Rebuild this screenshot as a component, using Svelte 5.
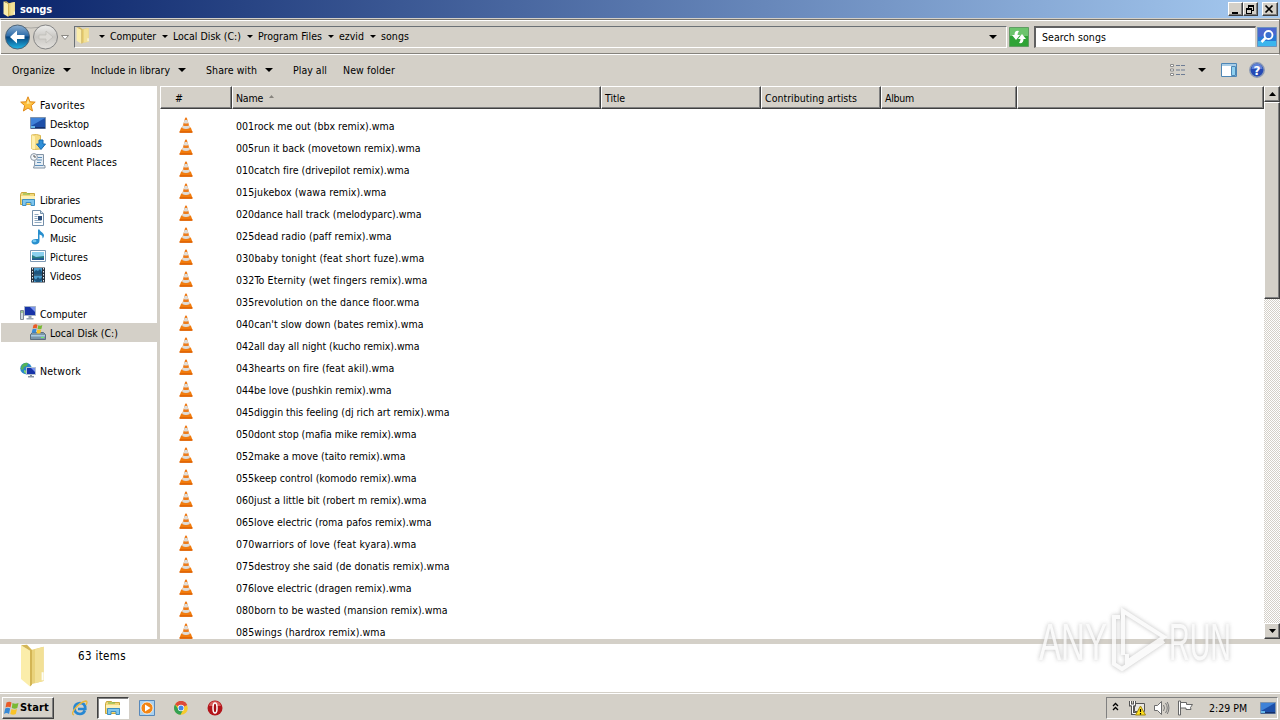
<script>
	// Text widths are the pixel widths of the classic UI font
	const songs = [
		['001rock me out (bbx remix).wma', 158.5],
		['005run it back (movetown remix).wma', 184.5],
		['010catch fire (drivepilot remix).wma', 173.5],
		['015jukebox (wawa remix).wma', 150.5],
		['020dance hall track (melodyparc).wma', 185.5],
		['025dead radio (paff remix).wma', 155.5],
		['030baby tonight (feat short fuze).wma', 188.5],
		['032To Eternity (wet fingers remix).wma', 191.5],
		['035revolution on the dance floor.wma', 183.5],
		["040can't slow down (bates remix).wma", 187.5],
		['042all day all night (kucho remix).wma', 183.5],
		['043hearts on fire (feat akil).wma', 158.5],
		['044be love (pushkin remix).wma', 155.5],
		['045diggin this feeling (dj rich art remix).wma', 213.5],
		['050dont stop (mafia mike remix).wma', 180.5],
		['052make a move (taito remix).wma', 169.5],
		['055keep control (komodo remix).wma', 180.5],
		['060just a little bit (robert m remix).wma', 190.5],
		['065love electric (roma pafos remix).wma', 195.5],
		['070warriors of love (feat kyara).wma', 180.5],
		['075destroy she said (de donatis remix).wma', 213.5],
		['076love electric (dragen remix).wma', 175.5],
		['080born to be wasted (mansion remix).wma', 211.5],
		['085wings (hardrox remix).wma', 149.5]
	];
	const crumbs = [
		['Computer', 46],
		['Local Disk (C:)', 68],
		['Program Files', 64],
		['ezvid', 25],
		['songs', 28]
	];
	const commands = [
		['Organize', 43, true],
		['Include in library', 79, true],
		['Share with', 51, true],
		['Play all', 34, false],
		['New folder', 52, false]
	];
	const columns = [
		['#', 72, 7],
		['Name', 369, 27],
		['Title', 160, 20],
		['Contributing artists', 120, 92],
		['Album', 136, 29]
	];
	const groups = [
		{
			name: 'Favorites',
			icon: 'star',
			width: 45,
			items: [
				['Desktop', 'desktop', 39],
				['Downloads', 'downloads', 52],
				['Recent Places', 'recent', 67]
			]
		},
		{
			name: 'Libraries',
			icon: 'library',
			width: 40,
			items: [
				['Documents', 'document', 53],
				['Music', 'music', 26],
				['Pictures', 'picture', 38],
				['Videos', 'video', 31]
			]
		},
		{ name: 'Computer', icon: 'computer', width: 47, items: [['Local Disk (C:)', 'disk', 68]] },
		{ name: 'Network', icon: 'network', width: 41, items: [] }
	];

	let selected = $state('disk');

	// spreads the letters so the text takes the given width
	function fit(node, width) {
		const extra = width - node.getBoundingClientRect().width;
		node.style.letterSpacing = `${extra / node.textContent.length}px`;
	}
</script>

{#snippet icon(name)}
	<svg class="icon" width="16" height="16" viewBox="0 0 16 16">
		{#if name === 'star'}
			<path d="M8 .8l2 5 5.2.3-4 3.5 1.3 5.4L8 12l-4.6 3 1.3-5.4-4-3.5L6 5.8z" fill="#fdbf3c" stroke="#e08a1c" />
			<path d="M8 3l1.3 3.7 3 .3-5.7 1z" fill="#ffe9a0" />
		{:else if name === 'desktop'}
			<path d="M.5 2.500h15v11h-15z" fill="#1d4fa8" stroke="#7e93ad" />
			<path d="M1 3h14L1 11z" fill="#3f82d8" />
			<path d="M1 12h14v1.500H1z" fill="#16306c" />
			<path d="M1 11h4v2H1z" fill="#67b7e8" />
		{:else if name === 'downloads'}
			<path d="M1.500 1l5-.5 4 1V15l-7 .5-2-1z" fill="#f5dc83" stroke="#d9b650" />
			<path d="M1.500 1L5 2.500v13l-3.500-1z" fill="#fff0b0" />
			<path d="M9 6h4v4h2.500L11 15.500 6.500 10H9z" fill="#2f8fd8" stroke="#176ab0" />
		{:else if name === 'recent'}
			<path d="M5 1.500h8.500v11H15v2.500H3.500l1-3z" fill="#e5edf4" stroke="#8293a4" />
			<path d="M8 4.500h4M7 7h5M7 9.500h4M5 12.500h8" stroke="#5d8db8" />
			<circle cx="4" cy="4" r="3.400" fill="#f5f8fa" stroke="#8a97a5" />
			<path d="M4 2v2h2" fill="none" stroke="#555" />
		{:else if name === 'library'}
			<path d="M.5 3.500l1-2h5l1 1h7v11H.5z" fill="#f1d77a" stroke="#c9a83f" />
			<path d="M1 5h14v3H1z" fill="#fdf1b8" />
			<path d="M3 3h7" stroke="#74b94c" />
			<path d="M2.500 14.500v-6h12v6H11v-3H6v3z" fill="#7fc5ec" stroke="#3c8fc4" />
		{:else if name === 'document'}
			<path d="M2.500.5h8l3 3v12h-11z" fill="#fff" stroke="#7590ab" />
			<path d="M10.500.5v3h3" fill="#cfdeea" stroke="#7590ab" />
			<path d="M4.500 4.500h4M4.500 6.500h3M4.500 8.500h3M4.500 10.500h7M4.500 12.500h7" stroke="#90a9c0" />
			<path d="M8 6h4v4H8z" fill="#2d4f7c" />
		{:else if name === 'music'}
			<path d="M8 .5h1.500c.5 2.500 4.500 3 4.500 6 0 1.500-1 2.500-1.500 3 .5-3-1.500-3.500-3-4V12c0 2-2 3.500-4.500 3.500S1.500 14 1.500 12.500 3.500 9.500 8 10z" fill="#288fce" />
			<ellipse cx="4.500" cy="12" rx="2" ry="1.200" fill="#72c7ef" />
		{:else if name === 'picture'}
			<path d="M.5 2.500h15v11h-15z" fill="#fff" stroke="#7f9ab5" />
			<path d="M2 4h12v8H2z" fill="#8cd0ee" />
			<path d="M2 7l4 2 8-1v4H2z" fill="#2a7d82" />
			<path d="M2 10.500l12-.5v2H2z" fill="#245b93" />
		{:else if name === 'video'}
			<path d="M1 .5h14v15H1z" fill="#26303c" />
			<path d="M4 1h8v6.500H4zM4 8.500h8V15H4z" fill="#4b9ccd" />
			<path d="M4 5l2-2 2 1 2-2 2 3v2.500H4zM4 11l2 1.500L8 10l2 2 2-2v3l-2 2H6l-2-2z" fill="#1c557f" />
			<path d="M2.500 1v14M13.500 1v14" stroke="#e6edf2" stroke-dasharray="1.500 1.500" />
		{:else if name === 'computer'}
			<path d="M.5 5.500h3v9h-3z" fill="#cfd8df" stroke="#808b96" />
			<path d="M1 7h2" stroke="#5db045" />
			<path d="M4.500 1.500h11v9h-11z" fill="#1733a8" stroke="#a6b4c6" />
			<path d="M10 2h5v5z" fill="#7893ee" />
			<path d="M8.500 11h3v2h2v1.500h-7V13h2z" fill="#98a5b4" />
		{:else if name === 'disk'}
			<path d="M.5 10.500l2-2h11l2 2v5H.5z" fill="#7b96a8" stroke="#5b6e7e" />
			<path d="M1 11h14v1.500H1z" fill="#a9cbe0" />
			<path d="M11 13.500h3" stroke="#6df06a" />
			<path d="M3.500 1Q6-.5 7.500 1L6.700 4.500q-2-1-4 0z" fill="#e95b27" />
			<path d="M8.300 1.300q2 1 4-.2L11.500 4.700q-2 1-4 0z" fill="#79b933" />
			<path d="M2.500 5.300q2-1 4 0L5.700 9q-2-1-4 0z" fill="#3689d6" />
			<path d="M7.300 5.500q2 1 4 0L10.500 9q-2 1-4 0z" fill="#f9c328" />
		{:else if name === 'network'}
			<circle cx="6" cy="6.500" r="5.700" fill="#2a87c9" />
			<path d="M2 3q3-3 6-2L7 4 4 5 3 8 .7 7z" fill="#54b458" />
			<path d="M4 8l3 1-1 3-2-2z" fill="#7ed373" />
			<path d="M6.500 5.500h9v7h-9z" fill="#1733a8" stroke="#b5c2d2" />
			<path d="M11 6h4v4z" fill="#7893ee" />
			<path d="M10 13h2v1h2v1.500H8V14h2z" fill="#8793a1" />
		{/if}
	</svg>
{/snippet}

{#snippet folder(width, height)}
	<svg class="icon" {width} {height} viewBox="0 0 16 16" preserveAspectRatio="none">
		<path d="M6.500 2.200L12.800 1v12.800L6.500 15z" fill="#e9d27b" />
		<path d="M8.500 2l4.300-1v12.800l-4.300.8z" fill="#f2e096" />
		<path d="M1.500.5L6 2.500v13.300L1.500 13z" fill="#fbedaa" />
		<path d="M1.500.5l3-.2L7 2.200v13L6 15.800V2.500z" fill="#d3b555" />
		<path d="M12.300 10.500v3" stroke="#fdfdf6" />
	</svg>
{/snippet}

{#snippet cone()}
	<svg class="cone" width="14" height="16" viewBox="0 0 14 16">
		<path d="M2.200 10.500h9.600L13.500 15q0 .8-.8.8H1.300q-.8 0-.8-.8z" fill="#f27c0c" />
		<path d="M.6 14.300h12.800v1.400H.6z" fill="#dc5f05" />
		<path d="M6.200.8q.8-.8 1.600 0L11 11.500q-4 2.300-8 0z" fill="#ee7d1c" />
		<path d="M5.600 3h2.800l.9 3q-2.300 1-4.600 0zM4 8.500q3 1.200 6 0l.8 2.500q-3.800 2-7.600 0z" fill="#dedcd8" />
	</svg>
{/snippet}

{#snippet arrow(w, h)}
	<svg class="arrow" width={w} height={h} viewBox="0 0 8 4" preserveAspectRatio="none">
		<path d="M0 0h8L4 4z" />
	</svg>
{/snippet}

{#snippet flag()}
	<path d="M3.500 2Q6.500.3 8.500 2L7.500 7q-2.500-1.500-5 0z" fill="#e95b27" />
	<path d="M9.500 2.500q2.500 1.500 6 0l-1.200 5q-2.500 1.300-5.500 0z" fill="#79b933" />
	<path d="M2.200 8q2.500-1.500 5 0L6 13.500q-2.500-1.800-5 0z" fill="#3689d6" />
	<path d="M8.500 8.500q2.500 1.300 5.500 0l-1.200 5q-2.500 1.300-5.500 0z" fill="#f9c328" />
{/snippet}

<div class="screen">
	<header class="title">
		{@render folder(16, 16)}
		<b use:fit={32}>songs</b>
		<div class="window-buttons">
			<button aria-label="Minimize"><svg width="12" height="11"><path d="M3 8h6v2H3z" /></svg></button>
			<button aria-label="Restore">
				<svg width="12" height="11"><path d="M4 1h6v6H8V6h1V3H5v1H4zM2 4h6v6H2zM3 6v3h4V6z" fill-rule="evenodd" /></svg>
			</button>
			<button class="close" aria-label="Close">
				<svg width="12" height="11"><path d="M2.500 1.500l7 7M9.500 1.500l-7 7" stroke="#000" stroke-width="1.700" /></svg>
			</button>
		</div>
	</header>

	<nav class="navigation">
		<svg class="history" width="72" height="30" viewBox="0 0 72 30">
			<defs>
				<linearGradient id="back" x2="0" y2="1">
					<stop offset="0" stop-color="#8fb1d2" />
					<stop offset=".45" stop-color="#2e6daa" />
					<stop offset=".5" stop-color="#07457f" />
					<stop offset="1" stop-color="#22b6e6" />
				</linearGradient>
				<linearGradient id="forward" x2="0" y2="1">
					<stop offset="0" stop-color="#eeeeec" />
					<stop offset=".5" stop-color="#c9c7c3" />
					<stop offset="1" stop-color="#e4e2de" />
				</linearGradient>
			</defs>
			<path d="M17 3.500q14 5 28 0" fill="none" stroke="#aaa8a3" />
			<circle cx="17.500" cy="15" r="12" fill="url(#back)" stroke="#4e6477" />
			<path d="M10 15l7-6.500v4.500h7.500v4H17v4.500z" fill="#fff" />
			<circle cx="45.500" cy="15" r="12" fill="url(#forward)" stroke="#858585" />
			<path d="M53 15l-7-6v4h-7v4h7v4z" fill="#dcdad6" stroke="#bcbab6" stroke-width=".7" />
			<path d="M61.500 13.500h7l-3.500 4z" fill="#fff" stroke="#8b8984" />
		</svg>
		<div class="address">
			{@render folder(17, 17)}
			{#each crumbs as [name, width]}
				<span class="separator">{@render arrow(6, 3)}</span>
				<span class="crumb" style:width="{width}px"><span use:fit={width}>{name}</span></span>
			{/each}
			<span class="address-drop">{@render arrow(8, 4)}</span>
		</div>
		<svg class="refresh" width="20" height="20" viewBox="0 0 20 20">
			<path d="M.5.5h19v19H.5z" fill="#2fa336" stroke="#5f9c62" />
			<path d="M1 1h18v8H1z" fill="#6cc46c" />
			<path d="M10 4Q5.500 3 5.500 8H3l4 5 4-5H8.500q0-2 1.500-4zM10 16q4.500 1 4.500-4H17l-4-5-4 5h2.500q0 2-1.500 4z" fill="#fff" />
		</svg>
		<div class="search"><span use:fit={64}>Search songs</span></div>
		<svg class="find" width="20" height="20" viewBox="0 0 20 20">
			<path d="M.5.5h19v19H.5z" fill="#2878d4" stroke="#6d92bd" />
			<path d="M1 1h18v7L1 10z" fill="#4b68cf" />
			<path d="M1 14h18v5H1z" fill="#3cb5ed" />
			<circle cx="11.500" cy="8" r="4" fill="#3a6fd0" stroke="#fff" stroke-width="1.800" />
			<path d="M8.500 11l-4 4" stroke="#fff" stroke-width="2.500" />
		</svg>
	</nav>

	<div class="toolbar">
		{#each commands as [name, width, menu]}
			<div class="command" class:menu>
				<span style:width="{width}px"><span use:fit={width}>{name}</span></span>
				{#if menu}{@render arrow(8, 4)}{/if}
			</div>
		{/each}
		<div class="views">
			<svg width="16" height="14" viewBox="0 0 16 14">
				<path d="M.5 1.500h3v2h-3zM.5 6h3v2h-3zM.5 10.500h3v2h-3z" fill="#fff" stroke="#8a8a8a" />
				<path d="M6 2.500h4m1 0h4M6 7h4m1 0h4M6 11.500h4m1 0h4" stroke="#6d7c94" />
			</svg>
			{@render arrow(8, 4)}
			<svg class="preview" width="16" height="14" viewBox="0 0 16 14">
				<path d="M.5.5h15v13H.5z" fill="#fff" stroke="#4d86b5" />
				<path d="M1 1h14v2H1z" fill="#a8cde7" />
				<path d="M10.500 3.500h4v9h-4z" fill="#8fd0ef" stroke="#4d86b5" />
			</svg>
			<svg width="16" height="16" viewBox="0 0 16 16">
				<circle cx="8" cy="8" r="7.200" fill="#2549b5" stroke="#8a99b5" stroke-width="1.500" />
				<path d="M2.500 7a5.500 5.500 0 0111 0z" fill="#5f82d8" />
				<text x="8" y="12.500" text-anchor="middle" class="question">?</text>
			</svg>
		</div>
	</div>

	<main>
		<aside>
			{#each groups as group}
				<section>
					<div class="place">{@render icon(group.icon)}<span use:fit={group.width}>{group.name}</span></div>
					{#each group.items as [name, kind, width]}
						<div class="place child" class:selected={selected === kind}>
							{@render icon(kind)}<span use:fit={width}>{name}</span>
						</div>
					{/each}
				</section>
			{/each}
		</aside>

		<div class="files">
			<div class="columns">
				{#each columns as [name, width, textWidth]}
					<div class="column" class:number={name === '#'} style:width="{width}px">
						<span use:fit={textWidth}>{name}</span>
						{#if name === 'Name'}
							<svg class="sort" width="5" height="3"><path d="M0 3L2.500 0 5 3z" fill="#86837d" /></svg>
						{/if}
					</div>
				{/each}
				<div class="column rest"></div>
			</div>
			<div class="rows">
				{#each songs as [name, width]}
					<div class="row">{@render cone()}<span use:fit={width}>{name}</span></div>
				{/each}
			</div>
		</div>

		<div class="scrollbar">
			<div class="scroll-button"><svg width="7" height="4"><path d="M0 4l3.500-4L7 4z" /></svg></div>
			<div class="thumb"></div>
			<div class="scroll-button end">{@render arrow(7, 4)}</div>
		</div>
	</main>

	<div class="details">
		{@render folder(32, 43)}
		<span use:fit={48}>63 items</span>
	</div>

	<footer>
		<button class="start">
			<svg width="17" height="16" viewBox="0 0 17 15">{@render flag()}</svg>
			<b use:fit={29}>Start</b>
		</button>
		<div class="task">
			<svg width="16" height="16" viewBox="0 0 16 16">
				<path d="M12.800 10.500Q11.500 14 8 14 2.500 13.500 2.500 8.500T8 3q5.500 0 5.300 6H6" fill="none" stroke="#2787d2" stroke-width="2.700" />
				<path d="M2 15Q-1.500 14 3.500 8T14 1q2 .5 0 4" fill="none" stroke="#e9b73b" stroke-width="1.300" />
			</svg>
		</div>
		<div class="task active">{@render icon('library')}</div>
		<div class="task">
			<svg width="16" height="16" viewBox="0 0 16 16">
				<path d="M.5.5h15v15H.5z" fill="#a9d1ef" stroke="#5788ba" />
				<circle cx="8" cy="8" r="6" fill="#f38513" stroke="#fff" stroke-width=".7" />
				<path d="M6 4.500L11.500 8 6 11.500z" fill="#fff" />
			</svg>
		</div>
		<div class="task">
			<svg width="14" height="14" viewBox="0 0 14 14">
				<circle cx="7" cy="7" r="6.800" fill="#f6ca2d" />
				<path d="M7 7L1 3.500A6.800 6.800 0 0113.300 4z" fill="#dd4a3a" />
				<path d="M1 3.500A6.800 6.800 0 006.500 13.800L9 9 5 9z" fill="#34a152" />
				<circle cx="7" cy="7" r="3.200" fill="#fff" />
				<circle cx="7" cy="7" r="2.500" fill="#4286e8" />
			</svg>
		</div>
		<div class="task">
			<svg width="16" height="16" viewBox="0 0 16 16">
				<circle cx="8" cy="8" r="7.500" fill="#b3151b" />
				<path d="M2 6a6.200 6.200 0 0112 0z" fill="#d9605d" />
				<ellipse cx="8" cy="8" rx="2" ry="5" fill="#a50e13" stroke="#fff" stroke-width="1.500" />
			</svg>
		</div>
		<div class="tray">
			<svg class="more" width="7" height="9"><path d="M1 4l2.500-2.500L6 4M1 8l2.500-2.500L6 8" fill="none" stroke="#000" stroke-width="1.300" /></svg>
			<svg class="lan" width="17" height="16" viewBox="0 0 17 16">
				<path d="M5.500 3.500h10v8h-10z" fill="#e8e6e1" stroke="#555" />
				<path d="M1.500 1v4h4V1M3.500 5v8.500h6" fill="none" stroke="#555" stroke-width="3" />
				<path d="M1.500 1v4h4V1M3.500 5v8.500h6" fill="none" stroke="#fff" />
				<path d="M11.500 6l5 9h-10z" fill="#ffdf1d" stroke="#a18715" />
				<path d="M11.500 9v3m0 1v1.500" stroke="#000" stroke-width="1.200" />
			</svg>
			<svg class="speaker" width="17" height="16" viewBox="0 0 17 16">
				<path d="M1.500 5.500h3l4-4v13l-4-4h-3z" fill="#fff" stroke="#6c6c6c" />
				<path d="M10.500 5q2 3 0 6M12.500 3q3.500 5 0 10M14.200 2q3.500 6 0 12" fill="none" stroke="#777" />
			</svg>
			<svg class="alert" width="17" height="16" viewBox="0 0 17 16">
				<path d="M1.500 1h2v14h-2z" fill="#fff" stroke="#666" />
				<path d="M3.500 2.500h6v2h6l-2 3 .5 2h-5v-1.500H3.500z" fill="#fff" stroke="#666" />
			</svg>
			<span class="clock" use:fit={40}>2:29 PM</span>
			{@render icon('desktop')}
		</div>
	</footer>

	<svg class="watermark" width="220" height="80" viewBox="0 0 220 80">
		<text x="4" y="53" textLength="68" lengthAdjust="spacingAndGlyphs">ANY</text>
		<text x="134" y="53" textLength="62" lengthAdjust="spacingAndGlyphs">RUN</text>
		<path d="M85 10h-6v47l8 5 42-28M88 48V4l41 26-37 25v-8" />
	</svg>
</div>

<style>
	:global(body) {
		overflow: hidden;
	}

	.screen {
		position: relative;
		display: flex;
		flex-direction: column;
		width: 1280px;
		height: 720px;
		overflow: hidden;
		background: #d4d0c8;
		color: #000;
		font: 10.5px/14px 'DejaVu Sans Condensed', 'DejaVu Sans', sans-serif;
		white-space: nowrap;
	}

	svg {
		display: block;
		flex: none;
	}

	button {
		padding: 0;
		background: #d4d0c8;
		border: 1px solid;
		border-color: #fff #404040 #404040 #fff;
		box-shadow: inset -1px -1px #808080;
		font: inherit;
	}

	.title {
		display: flex;
		align-items: center;
		height: 18px;
		padding-left: 2px;
		background: linear-gradient(90deg, #0a246a, #a6caf0);
		color: #fff;
		flex: none;
	}

	.title b {
		margin: 1px 0 0 2px;
		font-size: 11px;
	}

	.window-buttons {
		display: flex;
		margin-left: auto;
		padding-right: 2px;
	}

	.window-buttons button {
		width: 15px;
		height: 14px;
	}

	.window-buttons .close {
		margin-left: 4px;
		width: 16px;
	}

	.navigation {
		display: flex;
		align-items: center;
		box-sizing: border-box;
		height: 36px;
		margin-top: 1px;
		padding-bottom: 1px;
		border: 1px solid;
		border-color: #77756f #77756f #fff #fff;
		box-shadow: inset 0 1px #fff, inset 0 -1px #85827c;
		flex: none;
	}

	.history {
		margin-left: -1px;
	}

	.address {
		display: flex;
		align-items: center;
		box-sizing: border-box;
		width: 933px;
		height: 22px;
		margin-left: 2px;
		padding-bottom: 2px;
		border: 1px solid;
		border-color: #6a7075 #fff #fff #6a7075;
	}

	.address .icon {
		margin-right: 1px;
	}

	.separator {
		display: flex;
		justify-content: center;
		box-sizing: border-box;
		width: 17px;
		padding: 1px 0 0 1px;
	}

	.crumb {
		flex: none;
	}

	.address-drop {
		margin: 3px 9px 0 auto;
	}

	.refresh {
		margin-left: 2px;
	}

	.search {
		box-sizing: border-box;
		width: 222px;
		height: 22px;
		margin-left: 5px;
		padding: 2px 6px;
		background: #fff;
		border: solid;
		border-width: 2px 1px 1px 2px;
		border-color: #606060 #d4d0c8 #d4d0c8 #606060;
	}

	.find {
		margin-left: 1px;
	}

	.toolbar {
		display: flex;
		align-items: center;
		box-sizing: border-box;
		height: 31px;
		padding: 0 0 1px 12px;
		flex: none;
	}

	.command {
		display: flex;
		align-items: center;
		gap: 8px;
		margin-right: 16px;
	}

	.command.menu {
		margin-right: 20px;
	}

	.views {
		display: flex;
		align-items: center;
		margin-left: auto;
		padding-right: 15px;
		gap: 12px;
	}

	.preview {
		margin-left: 3px;
	}

	.question {
		fill: #fff;
		font: bold 12px 'DejaVu Sans', sans-serif;
	}

	main {
		display: flex;
		height: 553px;
		flex: none;
	}

	aside {
		width: 157px;
		padding-top: 9px;
		box-sizing: border-box;
		background: #fff;
		flex: none;
	}

	section {
		margin-bottom: 19px;
	}

	.place {
		display: flex;
		align-items: center;
		gap: 4px;
		box-sizing: border-box;
		height: 19px;
		padding-left: 20px;
	}

	.place .icon {
		margin-bottom: 1px;
	}

	.child {
		margin-left: 1px;
		padding-left: 29px;
	}

	.selected {
		background: #d4d0c8;
	}

	.files {
		display: flex;
		flex-direction: column;
		width: 1104px;
		margin-left: 3px;
		background: #fff;
		overflow: hidden;
		flex: none;
	}

	.columns {
		display: flex;
		height: 23px;
		background: #d4d0c8;
		flex: none;
	}

	.column {
		display: flex;
		align-items: center;
		box-sizing: border-box;
		padding: 0 0 0 3px;
		border: 1px solid;
		border-color: #fff #404040 #404040 #fff;
		box-shadow: inset -1px -1px #808080;
		flex: none;
	}

	.number {
		padding-left: 14px;
	}

	.rest {
		flex: 1;
	}

	.sort {
		margin: 0 0 3px 6px;
	}

	.rows {
		padding-top: 6px;
	}

	.row {
		display: flex;
		align-items: center;
		height: 22px;
		padding-left: 19px;
	}

	.cone {
		margin: 0 43px 2px 0;
	}

	.scrollbar {
		display: flex;
		flex-direction: column;
		width: 16px;
		background: repeating-conic-gradient(#fff 0 25%, #d4d0c8 0 50%) 0 0 / 2px 2px;
		flex: none;
	}

	.scroll-button,
	.thumb {
		display: flex;
		align-items: center;
		justify-content: center;
		box-sizing: border-box;
		height: 16px;
		background: #d4d0c8;
		border: 1px solid;
		border-color: #fff #404040 #404040 #fff;
		box-shadow: inset -1px -1px #808080;
	}

	.thumb {
		height: 197px;
	}

	.end {
		margin-top: auto;
	}

	.details {
		display: flex;
		box-sizing: border-box;
		height: 48px;
		margin-top: 5px;
		padding: 0 0 0 18px;
		background: #fff;
		flex: none;
	}

	.details span {
		margin: 5px 0 0 28px;
		font-size: 11.5px;
	}

	footer {
		display: flex;
		align-items: center;
		box-sizing: border-box;
		height: 28px;
		padding: 2px 2px 0;
		border-top: 1px solid #d4d0c8;
		box-shadow: inset 0 1px #fff;
		flex: none;
	}

	.start {
		display: flex;
		align-items: center;
		width: 52px;
		height: 22px;
		font-size: 11px;
	}

	.task {
		display: flex;
		align-items: center;
		justify-content: center;
		box-sizing: border-box;
		width: 32px;
		height: 22px;
		margin-right: 2px;
	}

	.start + .task {
		margin-left: 10px;
		margin-right: 1px;
	}

	.active {
		background: #fff;
		border: 1px solid;
		border-color: #404040 #fff #fff #404040;
		box-shadow: inset 1px 1px #808080;
	}

	.tray {
		display: flex;
		align-items: center;
		box-sizing: border-box;
		width: 172px;
		height: 22px;
		margin-left: auto;
		padding-left: 5px;
		border: 1px solid;
		border-color: #808080 #fff #fff #808080;
	}

	.more {
		margin-bottom: 3px;
	}

	.lan {
		margin-left: 10px;
	}

	.speaker,
	.alert {
		margin-left: 7px;
	}

	.clock {
		width: 40px;
		margin: 0 11px 0 15px;
	}

	.watermark {
		position: absolute;
		left: 1035px;
		top: 607px;
		fill: #fafafa;
		stroke: #fafafa;
		opacity: 0.85;
		filter: drop-shadow(0 0 2px #b4b4b4);
	}

	.watermark text {
		font: 51px/60px 'Liberation Sans', sans-serif;
		stroke: none;
	}

	.watermark path {
		fill: none;
		stroke-width: 4;
	}
</style>
